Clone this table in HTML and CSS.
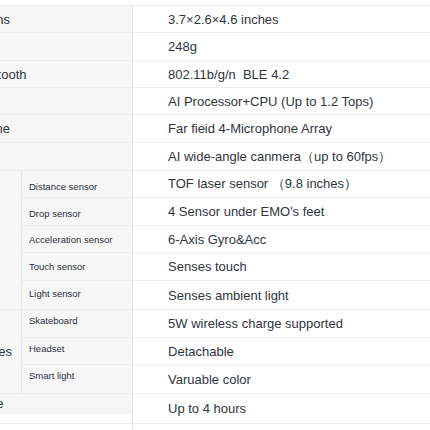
FILE: index.html
```html
<!DOCTYPE html>
<html lang="en">
<head>
<meta charset="utf-8">
<title>Specs</title>
<link rel="stylesheet" href="styles.css">
</head>
<body>
<div class="wrap">
<table class="specs">
  <colgroup>
    <col class="c1"><col class="c2"><col class="c3">
  </colgroup>
  <tbody>
    <tr><th colspan="2" class="lbl">Dimensions</th><td class="val">3.7×2.6×4.6 inches</td></tr>
    <tr><th colspan="2" class="lbl">Weight</th><td class="val">248g</td></tr>
    <tr><th colspan="2" class="lbl">WiFi/Bluetooth</th><td class="val">802.11b/g/n&nbsp; BLE 4.2</td></tr>
    <tr><th colspan="2" class="lbl">Chip</th><td class="val">AI Processor+CPU (Up to 1.2 Tops)</td></tr>
    <tr><th colspan="2" class="lbl">Microphone</th><td class="val">Far fieid 4-Microphone Array</td></tr>
    <tr><th colspan="2" class="lbl">Camera</th><td class="val">AI wide-angle canmera（up to 60fps）</td></tr>
    <tr><th rowspan="5" class="lbl grp">Sensors</th><th class="sub down2">Distance sensor</th><td class="val">TOF laser sensor （9.8 inches）</td></tr>
    <tr><th class="sub down1">Drop sensor</th><td class="val">4 Sensor under EMO's feet</td></tr>
    <tr><th class="sub">Acceleration sensor</th><td class="val">6-Axis Gyro&amp;Acc</td></tr>
    <tr><th class="sub">Touch sensor</th><td class="val">Senses touch</td></tr>
    <tr><th class="sub up1">Light sensor</th><td class="val">Senses ambient light</td></tr>
    <tr><th rowspan="3" class="lbl grp">Accessories</th><th class="sub up2">Skateboard</th><td class="val">5W wireless charge supported</td></tr>
    <tr><th class="sub up2">Headset</th><td class="val">Detachable</td></tr>
    <tr><th class="sub up3">Smart light</th><td class="val">Varuable color</td></tr>
    <tr class="last"><th colspan="2" class="lbl short">Battery life</th><td class="val">Up to 4 hours</td></tr>
    <tr class="tail"><th colspan="2" class="blank"></th><td class="blank"></td></tr>
  </tbody>
</table>
</div>
</body>
</html>
```
FILE: styles.css
```css
html, body {
  margin: 0;
  padding: 0;
  background: #ffffff;
}

body {
  font-family: "Liberation Sans", Arial, sans-serif;
  color: #2f3540;
  overflow: hidden;
}

.wrap {
  padding-top: 5px;
}

.specs {
  margin-left: -71px;
  width: calc(100% + 71px);
  table-layout: fixed;
  border-collapse: separate;
  border-spacing: 0;
  border-top: 1px solid #ececec;
}

.c1 { width: 93px; }
.c2 { width: 111px; }

.specs th,
.specs td {
  padding: 0;
  border-bottom: 1px solid #ececec;
  text-align: left;
  font-weight: normal;
  vertical-align: middle;
}

.lbl {
  background: #f6f6f7;
  padding-left: 13px !important;
  font-size: 13px;
  border-right: 1px solid #e6e6e6;
}

.grp {
  border-right: 1px solid #e6e6e6;
}

.sub {
  background: #f6f6f7;
  padding-left: 7px !important;
  font-size: 9.5px;
  color: #2a2f38;
  border-right: 1px solid #e6e6e6;
}

.sub.down2 { padding-top: 5px !important; }
.sub.down1 { padding-top: 3px !important; }
.sub.up1 { padding-bottom: 3px !important; }
.sub.up2 { padding-bottom: 6px !important; }
.sub.up3 { padding-bottom: 8px !important; }

.val {
  padding-left: 35px !important;
  font-size: 13px;
  white-space: nowrap;
}

.short {
  background: linear-gradient(#f6f6f7 20px, #ffffff 20px);
  vertical-align: top !important;
  padding-top: 2px !important;
}

.tail th,
.tail td {
  border-bottom: none;
  height: 8px;
}

.tail .blank:first-child {
  border-right: 1px solid #e6e6e6;
}

.specs tr:nth-child(1) { height: 27px; }
.specs tr:nth-child(2) { height: 28px; }
.specs tr:nth-child(3) { height: 27px; }
.specs tr:nth-child(4) { height: 27px; }
.specs tr:nth-child(5) { height: 28px; }
.specs tr:nth-child(6) { height: 28px; }
.specs tr:nth-child(7) { height: 27px; }
.specs tr:nth-child(8) { height: 28px; }
.specs tr:nth-child(9) { height: 27px; }
.specs tr:nth-child(10) { height: 28px; }
.specs tr:nth-child(11) { height: 29px; }
.specs tr:nth-child(12) { height: 28px; }
.specs tr:nth-child(13) { height: 27px; }
.specs tr:nth-child(14) { height: 29px; }
.specs tr:nth-child(15) { height: 30px; }
```
